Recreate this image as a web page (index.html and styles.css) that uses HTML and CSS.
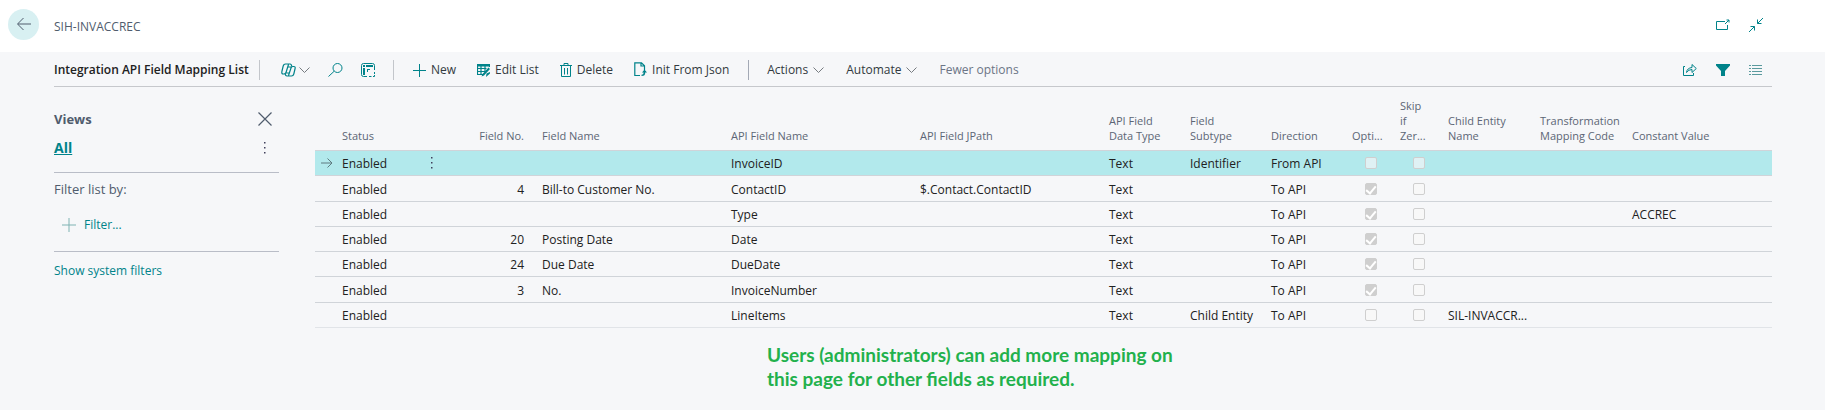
FILE: index.html
```html
<!DOCTYPE html>
<html lang="en">
<head>
<meta charset="utf-8">
<title>Integration API Field Mapping List</title>
<link rel="stylesheet" href="styles.css">
</head>
<body>
<header class="page-head">
  <button class="back" type="button" aria-label="Back"><svg width="16" height="14" viewBox="0 0 16 14"><path d="M15 7H2M7.500 1L1.500 7l6 6"/></svg></button>
  <span class="record">SIH-INVACCREC</span>
  <div class="head-tools">
    <button class="tool" type="button" aria-label="Open in new window"><svg width="14" height="14" viewBox="0 0 14 14"><path d="M9 3.500H.5v8h11V7M9 6l4-4M10.500 2H13v2.500" /></svg></button>
    <button class="tool" type="button" aria-label="Collapse"><svg width="14" height="14" viewBox="0 0 14 14"><path d="M0 14l5.500-5.500M1.500 8.500h4v4M14 0L8.500 5.500M8.500 1.500v4h4"/></svg></button>
  </div>
</header>

<main class="page">
  <div class="toolbar">
    <h1 class="title">Integration API Field Mapping List</h1>
    <span class="divider"></span>
    <div class="group group-icons">
      <button class="tool copilot" type="button" aria-label="Copilot"><svg width="15" height="14" viewBox="0 0 15 14"><path stroke-width="1.200" d="M4.500 1H9Q10.500 1 10.800 3.500M7.500 1.500L5 9.500Q4.500 11 3 11H2.200Q.4 11 .9 8.500L2.200 3Q2.700 1 4.500 1M10.500 13H6Q4.500 13 4.200 10.800M7.500 12.500L10 5Q10.500 3.500 12 3.500H12.800Q14.600 3.500 14.100 5.500L12.800 11Q12.300 13 10.500 13M6.500 4H10M5 10H8.500"/></svg><svg class="chev" width="11" height="6" viewBox="0 0 11 6"><path d="M.5.5l5 5 5-5"/></svg></button>
      <button class="tool" type="button" aria-label="Search"><svg width="15" height="14" viewBox="0 0 15 14"><circle cx="9.500" cy="5" r="4.500"/><path d="M6.200 8.200L.5 13.500"/></svg></button>
      <button class="tool" type="button" aria-label="Analyze"><svg width="14" height="14" viewBox="0 0 14 14"><path d="M6 13.500H2.500Q.5 13.500 .5 11.500V2.500q0-2 2-2h9q2 0 2 2V7M13.500 9v2M8 13.500h2.500M13.500 12v1.500H12"/><path class="fill" d="M2 2h2v2H2zM5 2h7v2H5zM2 5h2v7H2zM6 6h3v1H7v2H6z"/></svg></button>
    </div>
    <span class="divider"></span>
    <div class="group group-edit">
      <button class="tool" type="button"><svg width="13" height="14" viewBox="0 0 13 14"><path d="M0 7.500h13M6.500 1v13"/></svg>New</button>
      <button class="tool" type="button"><svg width="13" height="14" viewBox="0 0 13 14"><path d="M7 11.500H.5V2h12v2M.5 5.500h9M.5 8.500H8M4 3v8.500M8 3v5" stroke-width="1.200"/><path class="fill" d="M0 1h13v2.500H0zM11.500 4.500l1.500 1.500-6 6.500-2.500 1 1-2.500zM9.500 10.500L13 9v1.500L9 14z"/></svg>Edit List</button>
      <button class="tool" type="button"><svg width="12" height="14" viewBox="0 0 12 14"><path d="M0 2.500h12M4 2.500v-2h4v2M1.500 2.500v11h9v-11M4.500 5v6.500M7.500 5v6.500"/></svg>Delete</button>
      <button class="tool" type="button"><svg width="13" height="15" viewBox="0 0 13 15"><path d="M6 13.500H.8V.8h6.700l3 3V8M7 .8V4h3.500" stroke-width="1.200"/><path class="fill" d="M10.500 7.500L13 10.500h-1.800Q11.500 14 7.500 14v-1.300q2.200 0 2.200-2.200H8z"/></svg>Init From Json</button>
    </div>
    <span class="divider dark"></span>
    <div class="group group-menus">
      <button class="tool" type="button">Actions<svg class="chev" width="11" height="6" viewBox="0 0 11 6"><path d="M.5.5l5 5 5-5"/></svg></button>
      <button class="tool" type="button">Automate<svg class="chev" width="11" height="6" viewBox="0 0 11 6"><path d="M.5.5l5 5 5-5"/></svg></button>
      <button class="tool muted" type="button">Fewer options</button>
    </div>
    <div class="group group-right">
      <button class="tool" type="button" aria-label="Share"><svg width="14" height="14" viewBox="0 0 14 14"><path d="M2 3.500H.5v9h10V10M3.500 9.500Q4 5 9 4.500V1.500l4.300 4L9 9.500v-3Q5.500 6.500 3.500 9.500z"/></svg></button>
      <button class="tool" type="button" aria-label="Filter pane"><svg width="14" height="14" viewBox="0 0 14 14"><path class="fill" d="M0 1h14v1.500L9 8v5H5V8L0 2.500z"/></svg></button>
      <button class="tool" type="button" aria-label="List view"><svg width="14" height="14" viewBox="0 0 14 14"><path class="thin" d="M0 2.500h2M3 2.500h10M0 5.500h2M3 5.500h10M0 8.500h2M3 8.500h10M0 11.500h2M3 11.500h10"/></svg></button>
    </div>
  </div>

  <div class="content">
    <aside class="views">
      <div class="views-row">
        <h2 class="views-title">Views</h2>
        <button class="tool gray" type="button" aria-label="Close views"><svg width="14" height="14" viewBox="0 0 14 14"><path d="M.5.5l13 13M13.500.5l-13 13" stroke-width="1.200"/></svg></button>
      </div>
      <div class="views-row">
        <a class="all" href="#">All</a>
        <button class="tool more" type="button" aria-label="View options"><svg width="14" height="14" viewBox="0 0 14 14"><path class="dots" d="M6 1h1.500v1.500H6zM6 6h1.500v1.500H6zM6 11h1.500v1.500H6z"/></svg></button>
      </div>
      <div class="filters">
        <p class="filter-label">Filter list by:</p>
        <button class="tool add-filter" type="button"><svg width="14" height="14" viewBox="0 0 14 14"><path d="M0 7h14M7 0v14"/></svg>Filter...</button>
      </div>
      <a class="system" href="#">Show system filters</a>
    </aside>

    <section class="list">
      <table class="grid">
        <colgroup><col class="c-arrow"><col class="c-status"><col class="c-more"><col class="c-no"><col class="c-wide"><col class="c-wide"><col class="c-wide"><col class="c-type"><col class="c-type"><col class="c-type"><col class="c-check"><col class="c-check"><col class="c-code"><col class="c-code"><col></colgroup>
        <thead>
          <tr><th></th><th>Status</th><th></th><th class="num">Field No.</th><th>Field Name</th><th>API Field Name</th><th>API Field JPath</th><th>API Field<br>Data Type</th><th>Field<br>Subtype</th><th>Direction</th><th>Opti...</th><th>Skip<br>if<br>Zer...</th><th>Child Entity<br>Name</th><th>Transformation<br>Mapping Code</th><th>Constant Value</th></tr>
        </thead>
        <tbody>
          <tr class="selected"><td class="arrow"><svg width="12" height="10" viewBox="0 0 12 10"><path d="M0 5h11M6.500.5L11 5 6.500 9.500"/></svg></td><td>Enabled</td><td class="row-more"><svg width="4" height="14" viewBox="0 0 4 14"><path class="dots" d="M1 1h1.500v1.500H1zM1 6h1.500v1.500H1zM1 11h1.500v1.500H1z"/></svg></td><td class="num"></td><td></td><td>InvoiceID</td><td></td><td>Text</td><td>Identifier</td><td>From API</td><td class="check"><input type="checkbox" disabled aria-label="Optional"></td><td class="check"><input type="checkbox" disabled aria-label="Skip if zero"></td><td></td><td></td><td></td></tr>
          <tr><td></td><td>Enabled</td><td></td><td class="num">4</td><td>Bill-to Customer No.</td><td>ContactID</td><td>$.Contact.ContactID</td><td>Text</td><td></td><td>To API</td><td class="check"><input type="checkbox" checked disabled aria-label="Optional"></td><td class="check"><input type="checkbox" disabled aria-label="Skip if zero"></td><td></td><td></td><td></td></tr>
          <tr><td></td><td>Enabled</td><td></td><td class="num"></td><td></td><td>Type</td><td></td><td>Text</td><td></td><td>To API</td><td class="check"><input type="checkbox" checked disabled aria-label="Optional"></td><td class="check"><input type="checkbox" disabled aria-label="Skip if zero"></td><td></td><td></td><td>ACCREC</td></tr>
          <tr><td></td><td>Enabled</td><td></td><td class="num">20</td><td>Posting Date</td><td>Date</td><td></td><td>Text</td><td></td><td>To API</td><td class="check"><input type="checkbox" checked disabled aria-label="Optional"></td><td class="check"><input type="checkbox" disabled aria-label="Skip if zero"></td><td></td><td></td><td></td></tr>
          <tr><td></td><td>Enabled</td><td></td><td class="num">24</td><td>Due Date</td><td>DueDate</td><td></td><td>Text</td><td></td><td>To API</td><td class="check"><input type="checkbox" checked disabled aria-label="Optional"></td><td class="check"><input type="checkbox" disabled aria-label="Skip if zero"></td><td></td><td></td><td></td></tr>
          <tr><td></td><td>Enabled</td><td></td><td class="num">3</td><td>No.</td><td>InvoiceNumber</td><td></td><td>Text</td><td></td><td>To API</td><td class="check"><input type="checkbox" checked disabled aria-label="Optional"></td><td class="check"><input type="checkbox" disabled aria-label="Skip if zero"></td><td></td><td></td><td></td></tr>
          <tr><td></td><td>Enabled</td><td></td><td class="num"></td><td></td><td>LineItems</td><td></td><td>Text</td><td>Child Entity</td><td>To API</td><td class="check"><input type="checkbox" disabled aria-label="Optional"></td><td class="check"><input type="checkbox" disabled aria-label="Skip if zero"></td><td>SIL-INVACCR...</td><td></td><td></td></tr>
        </tbody>
      </table>
      <p class="note">Users (administrators) can add more mapping on<br>this page for other fields as required.</p>
    </section>
  </div>
</main>
</body>
</html>
```
FILE: styles.css
```css
* { box-sizing: border-box; }

body {
  margin: 0;
  background: #f6f7f9;
  color: #212121;
  font: 12px/16px "Open Sans", "Segoe UI", sans-serif;
}

h1, h2, p { margin: 0; }

svg {
  display: block;
  flex: none;
  fill: none;
  stroke: #00838a;
}

.fill { fill: #00838a; stroke: none; }
.dots { fill: #40405c; stroke: none; }
.thin { stroke: #5a9a9e; }
.chev { stroke: #767b80; }

.tool {
  display: flex;
  align-items: center;
  gap: 5px;
  padding: 0;
  border: 0;
  background: none;
  color: #323a40;
  font: inherit;
  white-space: nowrap;
}

.page-head {
  display: flex;
  align-items: center;
  height: 52px;
  padding: 0 62px 2px 8px;
  background: #fff;
}

.back {
  display: flex;
  align-items: center;
  justify-content: center;
  width: 31px;
  height: 31px;
  margin-bottom: 2px;
  padding: 0;
  border: 0;
  border-radius: 50%;
  background: #d8f0f2;
}
.back svg { stroke: #505c6d; }

.record {
  margin-left: 15px;
  padding-top: 4px;
  color: #505c6d;
}

.head-tools {
  display: flex;
  gap: 19px;
  margin-left: auto;
}

.page { padding: 0 53px 0 54px; }

.toolbar {
  display: flex;
  align-items: center;
  height: 35px;
  padding-top: 1px;
  border-bottom: 1px solid #c6c8cc;
}

.title {
  width: 205px;
  font-size: 12px;
  font-weight: 600;
  white-space: nowrap;
}

.divider {
  width: 1px;
  height: 20px;
  background: #c3c6cb;
}
.divider.dark { background: #a3a9b5; }

.group { display: flex; align-items: center; }
.group-icons { gap: 18px; padding: 0 18px 0 21px; }
.group-icons .tool { gap: 3px; }
.group-edit { gap: 21px; padding: 0 19px; }
.group-menus { gap: 22px; padding-left: 18px; }
.group-right { gap: 19px; margin-left: auto; padding-right: 9px; }
.muted { color: #6b7585; }

.content {
  display: flex;
  gap: 36px;
}

.views {
  flex: none;
  width: 225px;
  padding-top: 17px;
}

.views-row {
  display: flex;
  align-items: center;
  justify-content: space-between;
  height: 29px;
  padding-right: 7px;
}

.views-title {
  color: #505c6d;
  font-size: 13px;
  font-weight: 700;
}

.gray svg { stroke: #505c6d; }

.all {
  color: #00838a;
  font-size: 14px;
  font-weight: 700;
}

.filters {
  height: 80px;
  margin-top: 10px;
  padding-top: 8px;
  border: solid #b9bdc7;
  border-width: 1px 0;
}

.filter-label {
  color: #505c6d;
  font-size: 13px;
}

.add-filter {
  gap: 8px;
  margin: 20px 0 0 8px;
  color: #00838a;
}
.add-filter svg { stroke: #7fb3b3; }

.system {
  display: inline-block;
  margin-top: 11px;
  color: #00838a;
  text-decoration: none;
}

.list { flex: 1; min-width: 0; padding-top: 9px; }

.grid {
  width: 100%;
  table-layout: fixed;
  border-collapse: separate;
  border-spacing: 0;
}

.c-arrow { width: 18px; }
.c-status { width: 86px; }
.c-more { width: 26px; }
.c-no { width: 88px; }
.c-wide { width: 189px; }
.c-type { width: 81px; }
.c-check { width: 48px; }
.c-code { width: 92px; }

.grid th {
  height: 55px;
  padding: 0 0 7px 9px;
  border-bottom: 1px solid #d0d4d9;
  color: #5c6675;
  font-size: 11px;
  font-weight: 400;
  line-height: 15px;
  text-align: left;
  vertical-align: bottom;
  white-space: nowrap;
}

.grid td {
  height: 25px;
  padding: 2px 0 0 9px;
  border-bottom: 1px solid #d0d4d9;
  line-height: 16px;
  white-space: nowrap;
}

.grid tr:nth-child(4n+2) td { height: 26px; }
.grid tr:last-child td { border-bottom-color: #e1e4e8; }

.grid .num { padding-right: 9px; text-align: right; }

.selected td { background: #b2e9ec; }
.grid .arrow { padding: 0 0 0 6px; }
.arrow svg { stroke: #5f7b80; }
.grid .row-more { padding: 0 0 0 11px; }

.grid .check { padding: 0 0 0 8px; }

.check input {
  appearance: none;
  display: grid;
  place-items: center;
  width: 12px;
  height: 12px;
  margin: 0 auto;
  border: 1px solid #cfcfcf;
  border-radius: 2px;
  background: #f8f8f8;
}
.selected .check input { background: #dff1f4; }
.check input:checked { background: #cfcfcf; }
.check input:checked::after {
  content: "";
  width: 4px;
  height: 8px;
  margin-bottom: 2px;
  border: solid #fff;
  border-width: 0 2px 2px 0;
  transform: rotate(40deg);
}

.note {
  margin: 15px 0 0 452px;
  color: #22b14c;
  font: 700 19px/24px Lato, Calibri, sans-serif;
}
```
